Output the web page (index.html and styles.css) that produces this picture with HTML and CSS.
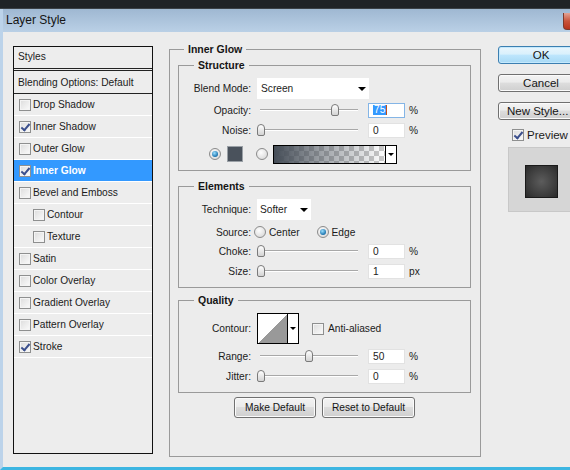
FILE: index.html
```html
<!DOCTYPE html>
<html>
<head>
<meta charset="utf-8">
<title>Layer Style</title>
<link rel="stylesheet" href="styles.css">
</head>
<body>

<div class="topbar"></div>

<div class="window">
  <div class="titlebar">
    <span class="title">Layer Style</span>
    <span class="close-btn"></span>
  </div>

  <div class="content">

    <!-- Styles list on the left -->
    <ul class="style-list">
      <li class="head">Styles</li>
      <li class="blend">Blending Options: Default</li>
      <li><span class="cb"></span>Drop Shadow</li>
      <li><span class="cb checked"></span>Inner Shadow</li>
      <li><span class="cb"></span>Outer Glow</li>
      <li class="active"><span class="cb checked"></span>Inner Glow</li>
      <li><span class="cb"></span>Bevel and Emboss</li>
      <li class="sub"><span class="cb"></span>Contour</li>
      <li class="sub"><span class="cb"></span>Texture</li>
      <li><span class="cb"></span>Satin</li>
      <li><span class="cb"></span>Color Overlay</li>
      <li><span class="cb"></span>Gradient Overlay</li>
      <li><span class="cb"></span>Pattern Overlay</li>
      <li><span class="cb checked"></span>Stroke</li>
    </ul>

    <!-- Inner Glow settings -->
    <fieldset class="group main">
      <legend>Inner Glow</legend>

      <fieldset class="group structure">
        <legend>Structure</legend>
        <div class="row row-select">
          <span class="lbl">Blend Mode:</span>
          <div class="select blend-mode">Screen<span class="arrow"></span></div>
        </div>
        <div class="row">
          <span class="lbl">Opacity:</span>
          <div class="slider"><span class="thumb" style="left:74px"></span></div>
          <span class="field focus"><span class="sel">75</span><span class="caret"></span></span>
          <span class="unit">%</span>
        </div>
        <div class="row">
          <span class="lbl">Noise:</span>
          <div class="slider"><span class="thumb" style="left:0px"></span></div>
          <span class="field">0</span>
          <span class="unit">%</span>
        </div>
        <div class="row color-row">
          <span class="radio on"></span>
          <span class="swatch"></span>
          <span class="radio"></span>
          <div class="grad-pick">
            <span class="grad"></span>
            <span class="drop"><span class="arrow small"></span></span>
          </div>
        </div>
      </fieldset>

      <fieldset class="group elements">
        <legend>Elements</legend>
        <div class="row row-select">
          <span class="lbl">Technique:</span>
          <div class="select technique">Softer<span class="arrow"></span></div>
        </div>
        <div class="row source-row">
          <span class="lbl">Source:</span>
          <span class="radio"></span>
          <span class="opt center">Center</span>
          <span class="radio on"></span>
          <span class="opt">Edge</span>
        </div>
        <div class="row">
          <span class="lbl">Choke:</span>
          <div class="slider"><span class="thumb" style="left:0px"></span></div>
          <span class="field">0</span>
          <span class="unit">%</span>
        </div>
        <div class="row">
          <span class="lbl">Size:</span>
          <div class="slider"><span class="thumb" style="left:0px"></span></div>
          <span class="field">1</span>
          <span class="unit">px</span>
        </div>
      </fieldset>

      <fieldset class="group quality">
        <legend>Quality</legend>
        <div class="row contour-row">
          <span class="lbl">Contour:</span>
          <div class="contour">
            <span class="curve"></span>
            <span class="drop"><span class="arrow small"></span></span>
          </div>
          <span class="cb"></span>
          <span class="opt">Anti-aliased</span>
        </div>
        <div class="row">
          <span class="lbl">Range:</span>
          <div class="slider"><span class="thumb" style="left:48px"></span></div>
          <span class="field">50</span>
          <span class="unit">%</span>
        </div>
        <div class="row">
          <span class="lbl">Jitter:</span>
          <div class="slider"><span class="thumb" style="left:0px"></span></div>
          <span class="field">0</span>
          <span class="unit">%</span>
        </div>
      </fieldset>

      <div class="defaults">
        <button class="btn make">Make Default</button>
        <button class="btn reset">Reset to Default</button>
      </div>
    </fieldset>

    <!-- Dialog buttons and preview -->
    <div class="side">
      <button class="btn big ok">OK</button>
      <button class="btn big">Cancel</button>
      <button class="btn big new-style">New Style...</button>
      <div class="preview-check"><span class="cb checked"></span>Preview</div>
      <div class="preview">
        <span class="preview-square"></span>
      </div>
    </div>

  </div>
</div>

</body>
</html>
```

FILE: styles.css
```css
* {
  box-sizing: border-box;
}

html, body {
  overflow: hidden;
}

body {
  margin: 0;
  background-color: #1f2327;
  font-family: "Liberation Sans", Arial, sans-serif;
  font-size: 10.2px;
  color: #1b1b1b;
}

/* Dark strip above the dialog */
.topbar {
  height: 9px;
  background: #1f2327;
  border-bottom: 1px solid #3a4046;
}

/* The dialog window */
.window {
  width: 620px;
  height: 461px;
  border-left: 3px solid #bcd3ea;
  border-bottom: 3px solid #3db6e2;
  background: #ececec;
}

.titlebar {
  height: 23px;
  display: flex;
  align-items: flex-start;
  padding-left: 3px;
  background: linear-gradient(#9fb8d2, #bad0e6);
}

.title {
  font-size: 12px;
  line-height: 23px;
  color: #151515;
}

.close-btn {
  margin-left: auto;
  margin-right: 14px;
  margin-top: 4px;
  width: 43px;
  height: 17px;
  border: 1px solid #7d3a2c;
  border-top: none;
  border-radius: 0 0 4px 4px;
  background: linear-gradient(#e4a394, #c9543b 50%, #b8341c);
}

.content {
  display: flex;
  align-items: flex-start;
  padding: 14px 0 0 10px;
}

/* Styles list */
.style-list {
  margin: 0;
  padding: 0;
  list-style: none;
  width: 140px;
  height: 408px;
  border: 1px solid #111;
  background: #ededed;
}

.style-list li {
  display: flex;
  align-items: center;
  height: 22px;
  padding-left: 5px;
  border-bottom: 1px solid #fff;
}

.style-list li .cb {
  margin-right: 2px;
}

.style-list li.head {
  height: 24px;
  padding-left: 4px;
  padding-bottom: 3px;
  border-bottom: 3px double #222;
}

.style-list li.blend {
  height: 23px;
  padding-left: 4px;
  border-bottom: 1px solid #222;
}

.style-list li.sub {
  padding-left: 19px;
}

.style-list li.active {
  background: #3399ff;
  color: #fff;
  font-weight: bold;
}

/* Checkboxes */
.cb {
  flex: none;
  position: relative;
  width: 12px;
  height: 12px;
  border: 1px solid #8e8f8f;
  background: linear-gradient(135deg, #dcdcdc, #fbfbfb);
  box-shadow: inset 0 0 0 1px #f4f4f4;
}

.cb.checked::after {
  content: "";
  position: absolute;
  left: 3px;
  top: 0px;
  width: 3px;
  height: 7px;
  border-right: 2px solid #3b4f8d;
  border-bottom: 2px solid #3b4f8d;
  transform: rotate(40deg);
}

/* Radio buttons */
.radio {
  flex: none;
  position: relative;
  width: 12px;
  height: 12px;
  border-radius: 50%;
  border: 1px solid #8b8b8b;
  background: radial-gradient(circle at 40% 35%, #fdfdfd, #d2d2d2);
}

.radio.on::after {
  content: "";
  position: absolute;
  left: 2px;
  top: 2px;
  width: 6px;
  height: 6px;
  border-radius: 50%;
  background: radial-gradient(circle at 40% 35%, #9be0ff, #1a72ad 70%, #0f4f80);
}

/* Group boxes */
fieldset.group {
  margin: 0;
  min-width: 0;
  border: 1px solid #9a9a9a;
  padding: 0 0 6px 0;
}

fieldset.group legend {
  margin-left: 15px;
  padding: 0 4px;
  font-size: 10.5px;
  font-weight: bold;
  line-height: 13px;
  color: #151515;
}

fieldset.main {
  width: 312px;
  height: 414px;
  margin: -3px 0 0 16px;
  padding: 3px 9px 0 8px;
}

fieldset.main > legend {
  margin-left: 6px;
}

fieldset.elements {
  margin-top: 9px;
}

fieldset.quality {
  margin-top: 6px;
}

/* Rows of controls */
.row {
  display: flex;
  align-items: center;
  height: 20px;
}

.row-select {
  height: 21px;
  margin-top: 6px;
  margin-bottom: 1px;
}

.lbl {
  flex: none;
  width: 72px;
  margin-right: 6px;
  text-align: right;
}

.select {
  display: flex;
  align-items: center;
  height: 21px;
  padding-left: 4px;
  background: #fff;
}

.blend-mode {
  width: 112px;
}

.technique {
  width: 54px;
  padding-left: 3px;
}

.arrow {
  margin-left: auto;
  margin-right: 3px;
  width: 0;
  height: 0;
  border-left: 4px solid transparent;
  border-right: 4px solid transparent;
  border-top: 4px solid #000;
}

.arrow.small {
  margin: 0;
  border-left-width: 3px;
  border-right-width: 3px;
  border-top-width: 3px;
}

/* Sliders */
.slider {
  flex: none;
  position: relative;
  width: 102px;
  height: 14px;
  margin-right: 9px;
}

.slider::before {
  content: "";
  position: absolute;
  left: 3px;
  right: 1px;
  top: 6px;
  height: 2px;
  background: linear-gradient(#a8a8a8 50%, #fff 50%);
}

.thumb {
  position: absolute;
  top: 1px;
  width: 8px;
  height: 12px;
  border: 1px solid #7a7a7a;
  border-radius: 4px 4px 2px 2px;
  background: linear-gradient(#ffffff, #d3d3d3);
}

/* Number fields */
.field {
  flex: none;
  display: flex;
  align-items: center;
  width: 37px;
  height: 15px;
  padding-left: 4px;
  background: #fff;
  border: 1px solid #e2e2e2;
}

.field.focus {
  border-color: #84b5e6;
}

.sel {
  background: #3399ff;
  color: #fff;
  padding: 0 1px;
  line-height: 10px;
}

.caret {
  width: 1px;
  height: 10px;
  background: #c24f18;
}

.unit {
  margin-left: 4px;
}

/* Colour / gradient row */
.color-row {
  margin-top: 4px;
  padding-left: 30px;
}

.swatch {
  flex: none;
  width: 16px;
  height: 16px;
  margin: 0 13px 0 6px;
  background: #4a525c;
  border: 1px solid #9aa0a6;
}

.grad-pick {
  display: flex;
  width: 124px;
  height: 19px;
  margin-left: 5px;
  border: 1px solid #000;
}

.grad {
  flex: 1;
  background:
    linear-gradient(to right, #454d57, rgba(69, 77, 87, 0.5) 45%, rgba(69, 77, 87, 0)),
    repeating-conic-gradient(#c9c9c9 0 25%, #fff 0 50%) 0 0 / 10px 10px;
}

.drop {
  flex: none;
  display: flex;
  align-items: center;
  justify-content: center;
  width: 11px;
  border-left: 1px solid #000;
  background: #fff;
}

/* Source radios */
.source-row {
  height: 18px;
  margin-top: 3px;
}

.source-row .lbl {
  margin-right: 3px;
}

.opt {
  margin-left: 3px;
}

.opt.center {
  margin-right: 17px;
}

/* Contour picker */
.contour-row {
  height: 31px;
  margin-top: 6px;
  margin-bottom: 2px;
}

.contour {
  display: flex;
  width: 42px;
  height: 31px;
  margin-right: 13px;
  border: 1px solid #000;
}

.curve {
  flex: 1;
  background: linear-gradient(to top left, #999 50%, #fff 50%);
}

.contour-row .opt {
  margin-left: 4px;
}

/* Buttons */
.btn {
  height: 21px;
  padding: 0;
  font-family: "Liberation Sans", Arial, sans-serif;
  font-size: 10.2px;
  color: #151515;
  border: 1px solid #707070;
  border-radius: 3px;
  background: linear-gradient(#f3f3f3, #ebebeb 45%, #dddddd 50%, #cfcfcf);
  box-shadow: inset 0 0 0 1px #fbfbfb;
}

.defaults {
  display: flex;
  justify-content: center;
  gap: 6px;
  margin-top: 4px;
}

.make {
  width: 82px;
}

.reset {
  width: 93px;
}

.side {
  display: flex;
  flex-direction: column;
  align-items: flex-start;
  margin-left: 17px;
}

.btn.big {
  width: 86px;
  height: 18px;
  margin-bottom: 10px;
  font-size: 11.5px;
}

.btn.ok {
  border-color: #3c7fb1;
  background: linear-gradient(#eaf6fd, #d9f0fc 45%, #bee6fd 50%, #a7d9f5);
  box-shadow: inset 0 0 0 1px #c4e9fd;
}

.btn.new-style {
  text-align: left;
  padding-left: 8px;
  white-space: nowrap;
}

.preview-check {
  display: flex;
  align-items: center;
  gap: 3px;
  margin: -1px 0 0 14px;
  font-size: 11.5px;
}

.preview {
  width: 80px;
  height: 65px;
  margin: 6px 0 0 10px;
  padding: 17px 0 0 16px;
  background: #d6d6d6;
  border: 1px solid #c8c8c8;
}

.preview-square {
  display: block;
  width: 33px;
  height: 33px;
  border: 1px solid #1a1a1a;
  background: radial-gradient(circle, #5c5c5c, #3a3a3a 70%, #2a2a2a);
}
```
